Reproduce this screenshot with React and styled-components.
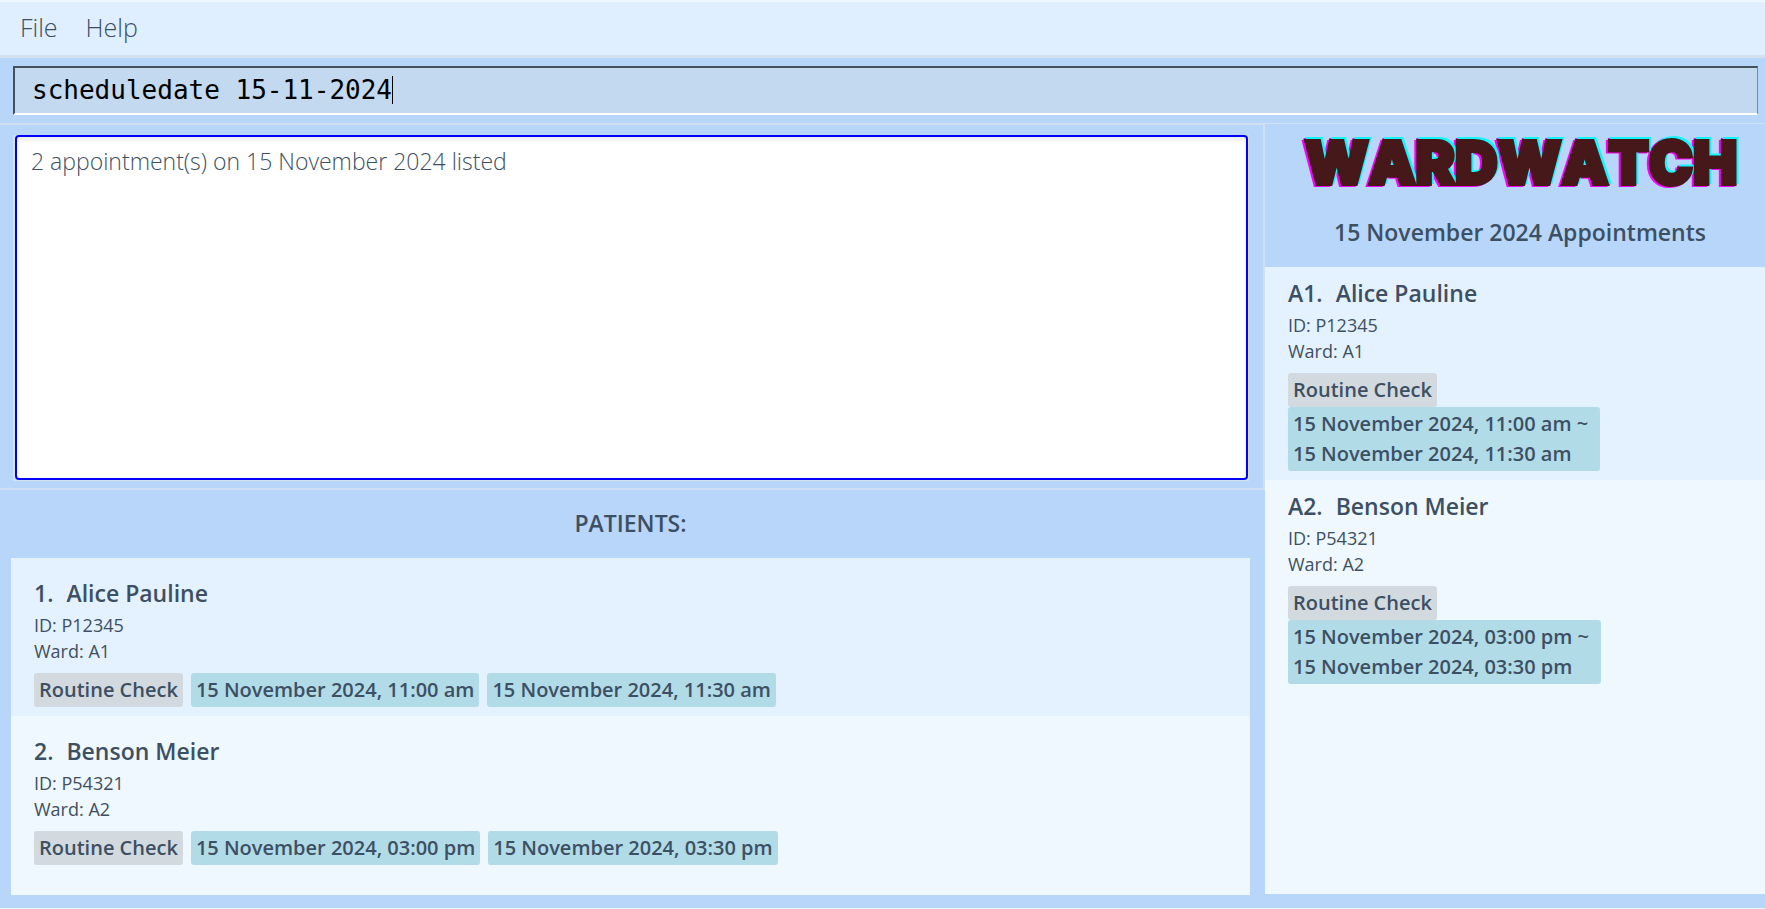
import React, { useState } from 'react';
import styled, { createGlobalStyle } from 'styled-components';

const GlobalStyle = createGlobalStyle`
  * { box-sizing: border-box; }
  body {
    margin: 0;
    background: #b7d6f9;
    color: #3d5063;
    font-family: "Open Sans", "Noto Sans", sans-serif;
  }
  h1, h2, h3, p, ul, ol { margin: 0; padding: 0; }
`;

const Window = styled.div`
  display: flex;
  flex-direction: column;
  min-height: 100vh;
  border-top: 2px solid #eff5fc;
  border-bottom: 1px solid #eff5fc;
`;

const MenuBar = styled.nav`
  display: flex;
  align-items: flex-start;
  gap: 12px;
  height: 56px;
  padding: 0 12px;
  background: #dfefff;
  border-bottom: 3px solid #d3e1ee;
`;

const MenuButton = styled.button`
  padding: 0 8px;
  border: 0;
  background: none;
  color: inherit;
  font: 300 25px/50px "Open Sans", sans-serif;
`;

const CommandBar = styled.div`
  padding: 8px 7px 8px 13px;
`;

const CommandField = styled.label`
  display: flex;
  align-items: center;
  height: 49px;
  padding: 0 17px 2px;
  background: #c2d9f0;
  border-style: solid;
  border-width: 2px 1px 2px 2px;
  border-color: #46505a #7b8a9a #ffffff #46505a;
`;

const CommandInput = styled.input`
  field-sizing: content;
  min-width: 0;
  padding: 0;
  border: 0;
  outline: 0;
  background: transparent;
  color: #000;
  caret-color: transparent;
  font: 26px/32px "DejaVu Sans Mono", monospace;
`;

const Caret = styled.span`
  width: 1px;
  height: 28px;
  background: #000;
`;

const Panes = styled.div`
  flex: 1;
  display: grid;
  grid-template-columns: 253fr 100fr;
`;

const MainPane = styled.main`
  display: flex;
  flex-direction: column;
  min-width: 0;
`;

const ResultPane = styled.section`
  padding: 10px 14px 7px 13px;
  border: solid #d0e0f0;
  border-width: 2px 2px 2px 0;
`;

const ResultFrame = styled.div`
  padding: 0 1px 1px 2px;
  background: #d3e1ee;
`;

const ResultDisplay = styled.div`
  height: 345px;
  padding: 9px 14px;
  background: #fff;
  border: 2px solid #0000ff;
  border-radius: 4px;
  box-shadow: inset 0 3px 4px #ececec;
  font-size: 23px;
  font-weight: 300;
  line-height: 30px;
`;

const ListTitle = styled.h2`
  padding: 18px 4px 20px 0;
  text-align: center;
  font-size: 23px;
  font-weight: 600;
  line-height: 30px;
`;

const PatientList = styled.ol`
  flex: 1;
  margin: 0 15px 13px 11px;
  background: #eff7ff;
  list-style: none;
`;

const AppointmentPane = styled.aside`
  display: flex;
  flex-direction: column;
  min-width: 0;
  padding-bottom: 14px;
  border-top: 1px solid #d0e0f0;
`;

const Logo = styled.h1`
  padding: 1px 0 0 12px;
  text-align: center;
  color: #47181a;
  font: 900 59px/76px Inter, sans-serif;
  font-kerning: none;
  -webkit-text-stroke: 4px #47181a;
  filter: drop-shadow(2px -2px 0 #12f6ff) drop-shadow(-2px 1px 0 #fb00fb);
`;

const AppointmentTitle = styled.h2`
  padding: 16px 0 20px 10px;
  text-align: center;
  font-size: 23px;
  font-weight: 600;
  line-height: 30px;
`;

const AppointmentList = styled.ol`
  flex: 1;
  background: #eff7ff;
  list-style: none;
`;

const Card = styled.li`
  padding: ${p => (p.$compact ? '10px 23px 9px' : '19px 23px 9px')};
  background: ${p => (p.$shaded ? '#e4f1ff' : '#eff7ff')};
`;

const Name = styled.h3`
  display: flex;
  gap: 13px;
  padding-bottom: 3px;
  font-size: 23px;
  font-weight: 600;
  line-height: 32px;
`;

const Detail = styled.p`
  font-size: 18px;
  line-height: 26px;
`;

const TagRow = styled.div`
  display: flex;
  flex-direction: ${p => (p.$stacked ? 'column' : 'row')};
  align-items: flex-start;
  flex-wrap: wrap;
  gap: ${p => (p.$stacked ? '0' : '8px')};
  padding-top: 9px;
`;

const Tag = styled.span`
  padding: 2px 5px;
  border-radius: 3px;
  background: ${p => (p.$time ? '#b2dbe8' : '#d2dadf')};
  font-size: 20px;
  font-weight: 600;
  line-height: 30px;
`;

const RangeTag = styled(Tag)`
  padding-right: 12px;
`;

const people = [
  { name: 'Alice Pauline', id: 'P12345', ward: 'A1', note: 'Routine Check', from: '15 November 2024, 11:00 am', to: '15 November 2024, 11:30 am' },
  { name: 'Benson Meier', id: 'P54321', ward: 'A2', note: 'Routine Check', from: '15 November 2024, 03:00 pm', to: '15 November 2024, 03:30 pm' },
];

function PersonInfo({ index, person }) {
  return (
    <>
      <Name><span>{index}</span><span>{person.name}</span></Name>
      <Detail>ID: {person.id}</Detail>
      <Detail>Ward: {person.ward}</Detail>
    </>
  );
}

export default function App() {
  const [command, setCommand] = useState('scheduledate 15-11-2024');
  return (
    <>
      <GlobalStyle />
      <Window>
        <MenuBar>
          <MenuButton type="button">File</MenuButton>
          <MenuButton type="button">Help</MenuButton>
        </MenuBar>
        <CommandBar>
          <CommandField>
            <CommandInput aria-label="Command" spellCheck={false} value={command} onChange={e => setCommand(e.target.value)} />
            <Caret />
          </CommandField>
        </CommandBar>
        <Panes>
          <MainPane>
            <ResultPane>
              <ResultFrame>
                <ResultDisplay role="status">2 appointment(s) on 15 November 2024 listed</ResultDisplay>
              </ResultFrame>
            </ResultPane>
            <ListTitle>PATIENTS:</ListTitle>
            <PatientList>
              {people.map((p, i) => (
                <Card key={p.id} $shaded={i % 2 === 0}>
                  <PersonInfo index={`${i + 1}.`} person={p} />
                  <TagRow>
                    <Tag>{p.note}</Tag>
                    <Tag $time>{p.from}</Tag>
                    <Tag $time>{p.to}</Tag>
                  </TagRow>
                </Card>
              ))}
            </PatientList>
          </MainPane>
          <AppointmentPane>
            <Logo>WARDWATCH</Logo>
            <AppointmentTitle>15 November 2024 Appointments</AppointmentTitle>
            <AppointmentList>
              {people.map((p, i) => (
                <Card key={p.id} $compact $shaded={i % 2 === 0}>
                  <PersonInfo index={`A${i + 1}.`} person={p} />
                  <TagRow $stacked>
                    <Tag>{p.note}</Tag>
                    <RangeTag $time>{p.from} ~<br />{p.to}</RangeTag>
                  </TagRow>
                </Card>
              ))}
            </AppointmentList>
          </AppointmentPane>
        </Panes>
      </Window>
    </>
  );
}
